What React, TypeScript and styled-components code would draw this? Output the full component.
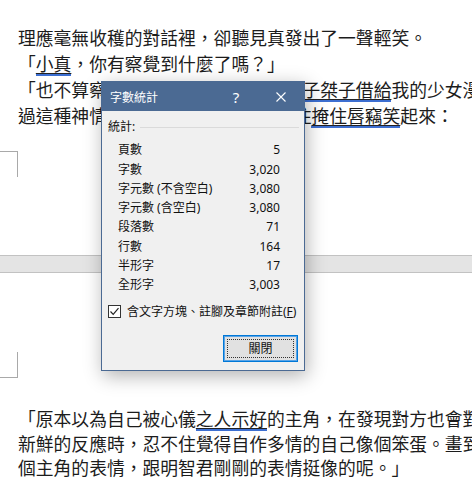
import React from "react";
import styled, { createGlobalStyle } from "styled-components";

const Global = createGlobalStyle`
  html, body { margin: 0; padding: 0; background: #ffffff; overflow: hidden; }
  #root { width: 472px; height: 490px; }
  * { text-spacing-trim: space-all; }
`;

const Doc = styled.div`
  position: relative;
  width: 472px;
  height: 490px;
  overflow: hidden;
  background: #ffffff;
  font-family: "Noto Sans CJK TC", "Noto Sans CJK SC", sans-serif;
  color: #1c1c1c;
`;

const TopPage = styled.section`
  height: 255px;
  box-sizing: border-box;
  padding-top: 24px;
  display: flex;
  flex-direction: column;
`;

const BottomPage = styled.section`
  padding-top: 79px;
  display: flex;
  flex-direction: column;
`;

const TextBlock = styled.div<{ $lh: number; $mt?: number }>`
  padding-left: 18px;
  margin-top: ${(p) => p.$mt ?? 0}px;
  font-size: 17.8px;
  line-height: ${(p) => p.$lh}px;
`;

const Line = styled.div`
  white-space: nowrap;
`;

const Marked = styled.span`
  text-decoration: underline;
  text-decoration-color: #222;
  text-decoration-thickness: 1px;
  text-underline-offset: 2px;
  background: linear-gradient(#3d6fd1, #3d6fd1) left bottom / 100% 2px no-repeat;
`;

const HalfGap = styled.span`
  display: inline-block;
  width: 0.5em;
`;

const CornerMark = styled.div<{ $edge: "top" | "bottom"; $mt: number }>`
  width: 18px;
  height: 26px;
  margin-top: ${(p) => p.$mt}px;
  box-sizing: border-box;
  border-right: 1px solid #a9a9a9;
  border-${(p) => p.$edge}: 1px solid #a9a9a9;
`;

const PageBreak = styled.div`
  height: 18px;
  box-sizing: border-box;
  border-top: 1px solid #c2c2c2;
  border-bottom: 1px solid #c2c2c2;
  background: #e4e4e4;
`;

/* ---------- dialog ---------- */

const Dialog = styled.div`
  position: absolute;
  left: 101px;
  top: 81px;
  width: 204px;
  height: 290px;
  box-sizing: border-box;
  border: 1px solid #4b6a93;
  background: #f0f0f0;
  box-shadow: 2px 5px 18px rgba(0, 0, 0, 0.3);
  display: flex;
  flex-direction: column;
  font-family: "Noto Sans", "Noto Sans CJK TC", sans-serif;
  font-size: 12px;
  color: #111;
`;

const TitleBar = styled.div`
  height: 29px;
  background: #4b6a93;
  display: flex;
  align-items: center;
  padding-left: 8px;
  padding-right: 6px;
  color: #ffffff;
`;

const Title = styled.div`
  flex: 1;
  font-family: "Noto Sans CJK TC", sans-serif;
  font-size: 12px;
  line-height: 16px;
`;

const HelpButton = styled.div`
  width: 24px;
  margin-right: 16px;
  text-align: center;
  font-family: "Noto Sans", sans-serif;
  font-size: 15px;
  line-height: 20px;
`;

const CloseButton = styled.div`
  width: 34px;
  height: 20px;
  display: flex;
  align-items: center;
  justify-content: center;
`;

const Body = styled.div`
  flex: 1;
  display: flex;
  flex-direction: column;
  padding: 8px 0 0 6px;
`;

const GroupHeader = styled.div`
  display: flex;
  align-items: center;
  height: 16px;
  line-height: 16px;
  padding-right: 5px;
`;

const GroupRule = styled.div`
  flex: 1;
  height: 1px;
  margin-left: 5px;
  background: #dadada;
`;

const StatList = styled.div`
  margin-top: 5.3px;
  padding-left: 10px;
  padding-right: 24px;
  display: flex;
  flex-direction: column;
`;

const StatRow = styled.div`
  display: flex;
  justify-content: space-between;
  height: 19.3px;
  line-height: 19.3px;
  white-space: nowrap;
`;

const CheckRow = styled.div`
  margin-top: 9.3px;
  height: 16px;
  line-height: 16px;
  display: flex;
  align-items: center;
  gap: 6px;
  white-space: nowrap;
`;

const CheckBox = styled.div`
  width: 13px;
  height: 13px;
  box-sizing: border-box;
  border: 1px solid #333;
  background: #ffffff;
  display: flex;
  align-items: center;
  justify-content: center;
`;

const AccessKey = styled.span`
  text-decoration: underline;
  text-underline-offset: 1px;
`;

const CloseBtn = styled.div`
  align-self: flex-end;
  margin-top: 15px;
  margin-right: 6px;
  width: 75px;
  height: 27px;
  box-sizing: border-box;
  border: 1px solid #0078d7;
  box-shadow: inset 0 0 0 1px #5aa4e6;
  background: #e1e1e1;
  padding: 3px;
  display: flex;
`;

const FocusRect = styled.div`
  flex: 1;
  border: 1px dotted #333;
  display: flex;
  align-items: center;
  justify-content: center;
  font-family: "Noto Sans CJK TC", sans-serif;
  font-size: 12px;
  line-height: 16px;
`;

const stats: [string, string][] = [
  ["頁數", "5"],
  ["字數", "3,020"],
  ["字元數 (不含空白)", "3,080"],
  ["字元數 (含空白)", "3,080"],
  ["段落數", "71"],
  ["行數", "164"],
  ["半形字", "17"],
  ["全形字", "3,003"],
];

export default function App() {
  return (
    <>
      <Global />
      <Doc>
        <TopPage>
          <TextBlock $lh={26}>
            <Line>理應毫無收穫的對話裡，卻聽見真發出了一聲輕笑。</Line>
            <Line>
              「<Marked>小真</Marked>，你有察覺到什麼了嗎？」
            </Line>
            <Line>
              「也不算察覺到什麼，只是想起之前<Marked>子桀子借給</Marked>我的少女漫畫
            </Line>
            <Line>
              過這種神情的真，讓我也跟著<HalfGap />忍不住<Marked>掩住唇竊笑</Marked>起來：
            </Line>
          </TextBlock>
          <CornerMark $edge="top" $mt={23} />
        </TopPage>
        <PageBreak />
        <BottomPage>
          <CornerMark $edge="bottom" $mt={0} />
          <TextBlock $lh={24.5} $mt={28.3}>
            <Line>
              「原本以為自己被心儀<Marked>之人示好</Marked>的主角，在發現對方也會對
            </Line>
            <Line>新鮮的反應時，忍不住覺得自作多情的自己像個笨蛋。畫到</Line>
            <Line>個主角的表情，跟明智君剛剛的表情挺像的呢。」</Line>
          </TextBlock>
        </BottomPage>

        <Dialog>
          <TitleBar>
            <Title>字數統計</Title>
            <HelpButton>?</HelpButton>
            <CloseButton>
              <svg width="10" height="10" viewBox="0 0 10 10">
                <path d="M0.5 0.5 L9.5 9.5 M9.5 0.5 L0.5 9.5" stroke="#ffffff" strokeWidth="1.1" fill="none" />
              </svg>
            </CloseButton>
          </TitleBar>
          <Body>
            <GroupHeader>
              統計:
              <GroupRule />
            </GroupHeader>
            <StatList>
              {stats.map(([k, v]) => (
                <StatRow key={k}>
                  <span>{k}</span>
                  <span>{v}</span>
                </StatRow>
              ))}
            </StatList>
            <CheckRow>
              <CheckBox>
                <svg width="11" height="11" viewBox="0 0 11 11">
                  <path d="M1.5 5.5 L4.2 8.3 L9.5 2.2" stroke="#222" strokeWidth="1.2" fill="none" />
                </svg>
              </CheckBox>
              <span>
                含文字方塊、註腳及章節附註(<AccessKey>F</AccessKey>)
              </span>
            </CheckRow>
            <CloseBtn>
              <FocusRect>關閉</FocusRect>
            </CloseBtn>
          </Body>
        </Dialog>
      </Doc>
    </>
  );
}
